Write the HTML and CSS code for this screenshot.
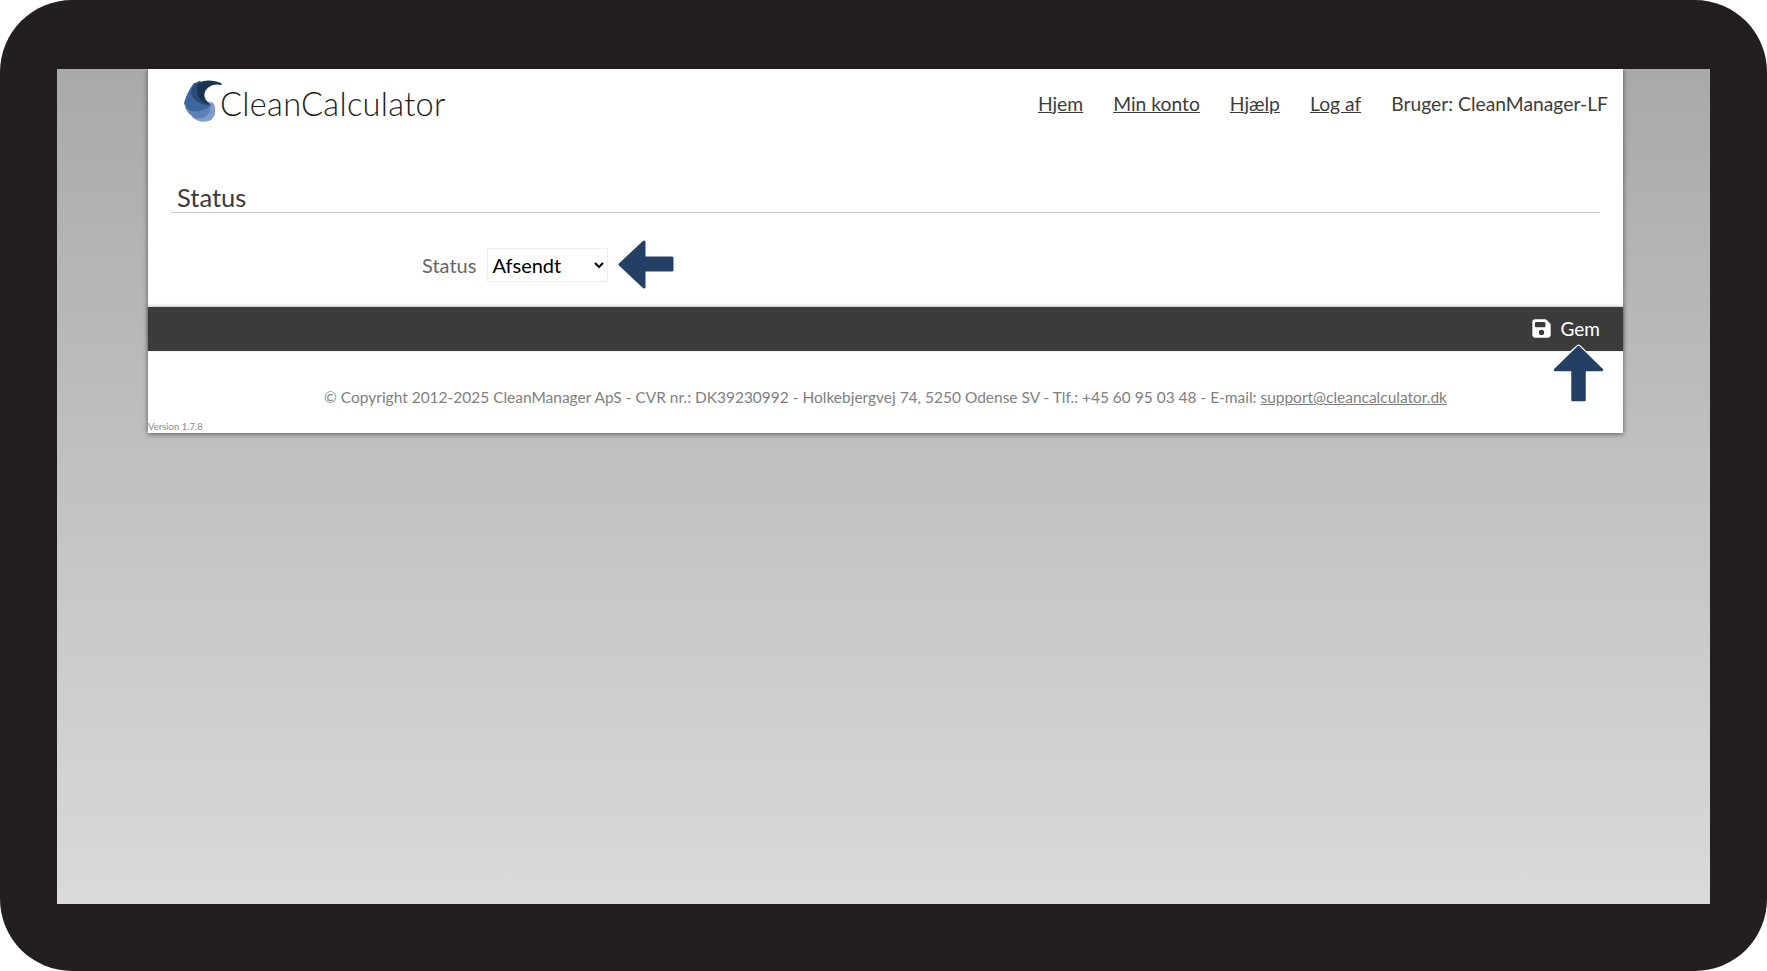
FILE: index.html
```html
<!DOCTYPE html>
<html lang="da">
<head>
  <meta charset="UTF-8">
  <title>CleanCalculator - Status</title>
  <link rel="stylesheet" href="styles.css">
</head>
<body>
  <div class="frame">
    <div class="viewport">
      <div class="card">
        <header class="top">
          <a class="logo" href="#">
            <svg class="logo-mark" viewBox="0 0 38 43" width="38" height="43" aria-hidden="true">
              <path fill="#7f9ccf" d="M12 28C18 23 27 21 30 25C32 31 32 37 27 41C21 44 13 43 8 38Z"/>
              <path fill="#5c80b8" d="M1 28C8 23 19 22 26 27C27 32 24 37 19 39C12 41 5 37 1 28Z"/>
              <path fill="#3c679f" d="M10 4C6 9 2 16 0 24C1 28 4 31 8 32C15 33 22 31 26 27C18 23 12 14 13 4Z"/>
              <path fill="#2a4a7a" d="M10 6C11 4 14 2 17 2C14 9 15 19 24 26C16 26 9 21 7 15C7 11 8 8 10 6Z"/>
              <path fill="#1a3553" d="M14 5C19 0 30 1 37 4C38 5 38 6 37 6C30 4 23 8 21 13C19 18 22 22 28 27C20 25 14 20 13 13C13 10 13 7 14 5Z"/>
            </svg>
            <span class="logo-text">CleanCalculator</span>
          </a>
          <nav class="nav">
            <a href="#">Hjem</a>
            <a href="#">Min konto</a>
            <a href="#">Hjælp</a>
            <a href="#">Log af</a>
            <span>Bruger: CleanManager-LF</span>
          </nav>
        </header>

        <h2 class="section-title">Status</h2>

        <div class="form-row">
          <label class="form-label" for="status">Status</label>
          <select class="form-select" id="status">
            <option>Afsendt</option>
          </select>
        </div>

        <div class="action-bar">
          <button class="save-btn" type="button">
            <svg viewBox="0 0 448 512" width="19" height="21" aria-hidden="true">
              <path fill="#fff" d="M64 32C29 32 0 61 0 96v320c0 35 29 64 64 64h320c35 0 64-29 64-64V173c0-17-7-33-19-45l-77-77c-12-12-28-19-45-19H64zm0 96c0-18 14-32 32-32h192c18 0 32 14 32 32v64c0 18-14 32-32 32H96c-18 0-32-14-32-32v-64zm160 160a64 64 0 1 1 0 128 64 64 0 1 1 0-128z"/>
            </svg>
            Gem
          </button>
        </div>

        <footer class="foot">
          <p class="copyright">© Copyright 2012-2025 CleanManager ApS - CVR nr.: DK39230992 - Holkebjergvej 74, 5250 Odense SV - Tlf.: +45 60 95 03 48 - E-mail: <a href="#">support@cleancalculator.dk</a></p>
          <div class="version">Version 1.7.8</div>
        </footer>
      </div>
    </div>

    <svg class="arrow arrow-left" viewBox="0 0 56 49" width="56" height="49" aria-hidden="true">
      <path fill="#243f64" stroke="#243f64" stroke-width="3" stroke-linejoin="round" d="M2 24.5L26 2V18H54V30H26V47Z"/>
    </svg>
    <svg class="arrow arrow-up" viewBox="0 0 53 60" width="53" height="60" aria-hidden="true">
      <path fill="none" stroke="#fff" stroke-width="5" stroke-linejoin="round" d="M26.5 4L49 26H2Z"/>
      <path fill="#243f64" stroke="#243f64" stroke-width="2.5" stroke-linejoin="round" d="M26.5 4L50 27H32.5V57H20.5V27H3Z"/>
    </svg>
  </div>
</body>
</html>
```

FILE: styles.css
```css
* { box-sizing: border-box; }
body { margin: 0; background: #fff; font-family: "Lato", "Open Sans", sans-serif; }
a { color: inherit; }

.frame { position: relative; height: 971px; background: #231f20; border-radius: 72px; padding: 69px 57px 67px 57px; }
.viewport { height: 100%; background: linear-gradient(#a9a9a9, #dadada); padding-left: 91px; }

.card { width: 1475px; background: #fff; box-shadow: 0 1px 5px rgba(0,0,0,0.55); }

.top { height: 70px; display: flex; align-items: center; justify-content: space-between; padding: 0 15px 0 36px; }
.logo { display: flex; align-items: center; color: #1c1c1c; text-decoration: none; }
.logo-mark { display: block; flex-shrink: 0; margin: 0 -2px 7px 0; }
.logo-text { margin-bottom: 2px; font-size: 32.6px; font-weight: 300; letter-spacing: 0.3px; }
.nav { display: flex; gap: 30px; margin-bottom: 2px; font-size: 19.3px; color: #3c3c3c; }

.section-title { height: 74px; margin: 0 23px 0 23px; padding: 0 0 0 6px; display: flex; align-items: flex-end; border-bottom: 1px solid #ccc; font-size: 25.5px; font-weight: 400; line-height: 29px; color: #3c3c3c; }

.form-row { display: flex; align-items: center; justify-content: flex-start; gap: 11px; padding: 35px 0 25px 274px; }
.form-label { font-size: 20px; color: #666; }
.form-select { width: 121px; height: 34px; padding: 0; background: #fff; border: 1px solid #eee; font-family: inherit; font-size: 20px; color: #000; }

.action-bar { height: 44px; display: flex; align-items: center; justify-content: flex-end; padding-right: 23px; background: #3b3b3b; box-shadow: 0 -1px 3px rgba(0,0,0,0.25); }
.save-btn { display: flex; align-items: center; gap: 10px; padding: 0 0 1px; background: none; border: none; color: #fff; font-family: inherit; font-size: 19px; }

.foot { padding-top: 36px; color: #808080; }
.copyright { margin: 0; height: 20px; font-size: 15.48px; line-height: 20px; text-align: center; }
.version { margin-top: 14px; height: 12px; font-size: 9.5px; line-height: 12px; color: #8a8a8a; }

.arrow { position: absolute; display: block; }
.arrow-left { left: 618px; top: 240px; }
.arrow-up { left: 1552px; top: 343px; }
```
